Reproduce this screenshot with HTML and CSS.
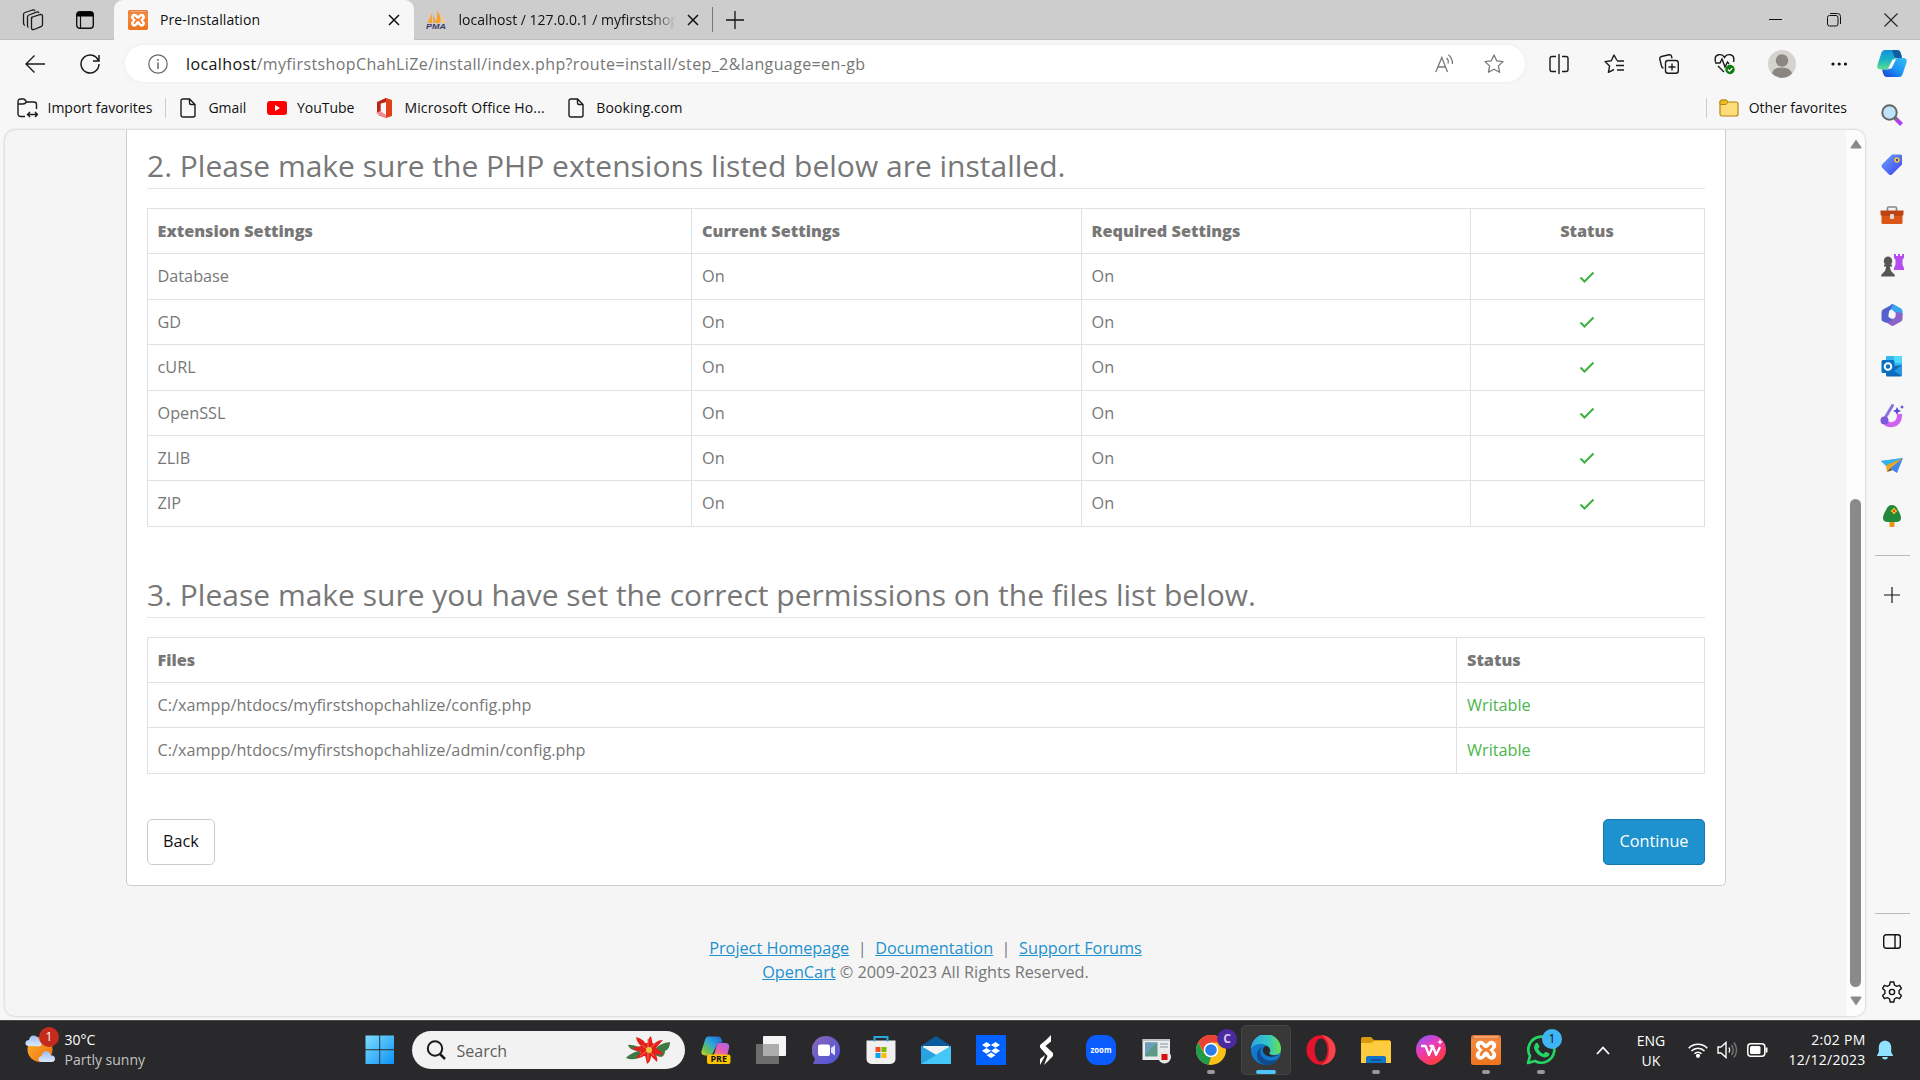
FILE: index.html
```html
<!DOCTYPE html>
<html lang="en">
<head>
<meta charset="utf-8">
<title>Pre-Installation</title>
<link rel="stylesheet" href="styles.css">
</head>
<body>
<svg width="0" height="0" class="defs" aria-hidden="true">
  <defs>
    <linearGradient id="orange" x1="0" y1="0" x2="0" y2="1"><stop offset="0" stop-color="#d8743a"/><stop offset=".2" stop-color="#f58a3c"/><stop offset="1" stop-color="#ee7420"/></linearGradient>
    <linearGradient id="cpA" x1="0" y1="0" x2="0" y2="1"><stop offset="0" stop-color="#1490df"/><stop offset=".5" stop-color="#1bb3c4"/><stop offset="1" stop-color="#5fe08a"/></linearGradient>
    <linearGradient id="cpB" x1="0" y1="1" x2="1" y2="0"><stop offset="0" stop-color="#1a3fd0"/><stop offset=".5" stop-color="#1c95f5"/><stop offset="1" stop-color="#35c0f5"/></linearGradient>
    <linearGradient id="preA" x1="1" y1="0" x2="0" y2="1"><stop offset="0" stop-color="#1b62d8"/><stop offset=".45" stop-color="#2ea6dc"/><stop offset=".75" stop-color="#6cc04a"/><stop offset="1" stop-color="#e0d030"/></linearGradient>
    <linearGradient id="preB" x1="1" y1="0" x2="0" y2="1"><stop offset="0" stop-color="#a06be8"/><stop offset=".5" stop-color="#e15bc0"/><stop offset="1" stop-color="#ff8a4a"/></linearGradient>
    <linearGradient id="win" x1="0" y1="0" x2="1" y2="1"><stop offset="0" stop-color="#7fdcff"/><stop offset="1" stop-color="#0a93f5"/></linearGradient>
    <linearGradient id="sun" x1="0" y1="0" x2="1" y2="1"><stop offset="0" stop-color="#fbb62c"/><stop offset="1" stop-color="#ef6a12"/></linearGradient>
    <linearGradient id="cloud" x1="0" y1="0" x2="0" y2="1"><stop offset="0" stop-color="#9dbcf2"/><stop offset="1" stop-color="#dce9fd"/></linearGradient>
    <linearGradient id="tag" x1="0" y1="0" x2="1" y2="1"><stop offset="0" stop-color="#6aa6ff"/><stop offset="1" stop-color="#3d3df0"/></linearGradient>
    <linearGradient id="edgeA" x1="0" y1="0" x2="1" y2="0"><stop offset="0" stop-color="#2aa8e8"/><stop offset=".6" stop-color="#35c8c0"/><stop offset="1" stop-color="#6be04a"/></linearGradient>
    <linearGradient id="wps" x1="0" y1="0" x2=".6" y2="1"><stop offset="0" stop-color="#7a5cff"/><stop offset=".45" stop-color="#e83cc0"/><stop offset="1" stop-color="#ff3a3a"/></linearGradient>
    <linearGradient id="chat" x1="0" y1="0" x2="1" y2="1"><stop offset="0" stop-color="#8a68b8"/><stop offset="1" stop-color="#4a52d8"/></linearGradient>
    <symbol id="xampp" viewBox="0 0 30 30"><rect width="30" height="30" rx="2.5" fill="url(#orange)"/><path d="M3 2h24" stroke="#f7b183" stroke-width="1.5"/><path d="M9.500 10.500l11 9.500M20.500 10.500l-11 9.500" stroke="#fff" stroke-width="9.500" stroke-linecap="round"/><path d="M10 11q1 2.500 5 3.700t5 5M20 11q-1 2.500-5 3.700t-5 5" fill="none" stroke="#f07d2c" stroke-width="2.600" stroke-linecap="round"/></symbol>
    <symbol id="page" viewBox="0 0 16 20"><path d="M3 1h6.500L15 6.500V17a2 2 0 0 1-2 2H3a2 2 0 0 1-2-2V3a2 2 0 0 1 2-2zM9.500 1v4a1.500 1.500 0 0 0 1.500 1.500h4" fill="none" stroke="#1b1b1b" stroke-width="1.400"/></symbol>
    <symbol id="cross" viewBox="0 0 12 12"><path d="M1 1l10 10M11 1L1 11" stroke="#111" stroke-width="1.500" fill="none"/></symbol>
    <symbol id="check" viewBox="0 0 16 12"><path d="M1.500 6.500l4 4L14.500 1.500" stroke="#3eb23e" stroke-width="2" fill="none"/></symbol>
    <symbol id="plus" viewBox="0 0 18 18"><path d="M9 0v18M0 9h18" stroke="#111" stroke-width="1.300"/></symbol>
  </defs>
</svg>

<div class="screen">
  <header class="tabs">
    <svg class="workspaces" width="22" height="22" viewBox="0 0 22 22" fill="none" stroke="#1b1b1b" stroke-width="1.300"><path d="M9 8.500L18.500 5.500Q20.500 5.300 20.500 7V15.500Q20.500 17 19 17.600L12 20.500Q9.500 21 9.500 19V10Q9.500 9 10.500 8.500zM6.500 18.500Q5.500 18 5.500 16.500V8Q5.500 6.500 7 6L15 3Q16.500 2.800 17 4M3 16.500Q1.500 16 1.500 14V5.500Q1.500 4 3 3.500L10.500 1Q12.500.5 13 2"/></svg>
    <svg class="tab-actions" width="18" height="18" viewBox="0 0 18 18"><rect x=".7" y=".7" width="16.600" height="16.600" rx="3" fill="none" stroke="#111" stroke-width="1.400"/><path d="M1 5V3a2 2 0 0 1 2-2h12a2 2 0 0 1 2 2v2.500H1z" fill="#000"/><path d="M4.500 5v12" stroke="#111" stroke-width="1.200"/></svg>
    <div class="tab tab-active">
      <svg width="20" height="20"><use href="#xampp"/></svg>
      <span class="tab-title">Pre-Installation</span>
      <svg class="tab-close" width="12" height="12"><use href="#cross"/></svg>
    </div>
    <div class="tab tab-idle">
      <svg width="20" height="20" viewBox="0 0 20 20"><path d="M6 3v10H1.500zM7 4.500L10 12 7 13z" fill="#f7a234"/><path d="M11 .5Q16 6 14 13H9q3-6 2-12.500z" fill="#f9a22b"/><path d="M15.500 5Q19 9 19 13h-4q1.500-4 .5-8z" fill="#fbc77a"/><text x="0" y="19" class="pma-text" textLength="20" lengthAdjust="spacingAndGlyphs">PMA</text></svg>
      <span class="tab-title tab-title-fade">localhost / 127.0.0.1 / myfirstshop</span>
      <svg class="tab-close" width="12" height="12"><use href="#cross"/></svg>
    </div>
    <i class="tab-divider"></i>
    <svg class="new-tab" width="18" height="18"><use href="#plus"/></svg>
    <div class="window-controls">
      <svg width="14" height="14" viewBox="0 0 14 14"><path d="M0 6.500h13" stroke="#111"/></svg>
      <svg width="14" height="14" viewBox="0 0 14 14" fill="none" stroke="#111"><rect x=".5" y="2.500" width="10.500" height="10.500" rx="2"/><path d="M3 .5h7.500Q13.500.5 13.500 3.500V11"/></svg>
      <svg width="14" height="14" viewBox="0 0 14 14"><path d="M.5.500l13 13M13.500.5l-13 13" stroke="#222" stroke-width="1.100"/></svg>
    </div>
  </header>

  <div class="browser">
    <div class="browser-main">
      <div class="toolbar">
        <svg class="back" width="20" height="20" viewBox="0 0 20 20" fill="none" stroke="#1b1b1b" stroke-width="1.400"><path d="M20 10H1M9.500 1.500L1 10l8.500 8.500"/></svg>
        <svg class="reload" width="20" height="20" viewBox="0 0 20 20" fill="none" stroke="#1b1b1b" stroke-width="1.500"><path d="M18.500 7A9 9 0 1 0 19 10M19 1v6h-6"/></svg>
        <div class="address">
          <svg width="20" height="20" viewBox="0 0 20 20" fill="none" stroke="#666"><circle cx="10" cy="10" r="9.200" stroke-width="1.200"/><path d="M10 8.500V15M10 5v1.700" stroke-width="1.500"/></svg>
          <span class="url"><b>localhost</b>/myfirstshopChahLiZe/install/index.php?route=install/step_2&amp;language=en-gb</span>
          <svg class="read-aloud" width="20" height="20" viewBox="0 0 20 20" fill="none" stroke="#777" stroke-width="1.300"><path d="M.8 18L6.800 3.500 12.500 18M3 13h8M11.500 4q2.500 2 1.500 5.500M13.500.8q4 3.200 4 9.200"/></svg>
          <svg width="20" height="20" viewBox="0 0 20 20" fill="none" stroke="#777" stroke-width="1.300" stroke-linejoin="round"><path d="M10 1l2.700 5.800 6.300.8-4.600 4.300 1.200 6.400L10 15.200l-5.600 3.100 1.200-6.400L1 7.600l6.300-.8z"/></svg>
        </div>
        <div class="tools">
          <svg width="20" height="20" viewBox="0 0 20 20" fill="none" stroke="#1b1b1b" stroke-width="1.400"><path d="M7 2.500H3a2 2 0 0 0-2 2v11a2 2 0 0 0 2 2h4M13 2.500h4a2 2 0 0 1 2 2v11a2 2 0 0 1-2 2h-4M10 0v20"/></svg>
          <svg width="20" height="20" viewBox="0 0 20 20" fill="none" stroke="#1b1b1b" stroke-width="1.400" stroke-linejoin="round"><path d="M13 6.500L10 1 7.300 6.800 1 7.600l4.600 4.300-1.200 6.400L10 15.500M13 7h7M12 11.500h8M13 16h7"/></svg>
          <svg width="20" height="20" viewBox="0 0 20 20" fill="none" stroke="#1b1b1b" stroke-width="1.400"><rect x="6.500" y="6.500" width="12.800" height="12.800" rx="2.500"/><path d="M13 9.500v7M9.500 13h7M4.500 14Q3 14 2.500 12L.8 5Q.5 3 2.500 2.500L10 .8q2-.3 2.500 1.500l.5 2"/></svg>
          <svg width="22" height="22" viewBox="0 0 22 22" fill="none" stroke="#1b1b1b" stroke-width="1.400"><path d="M1.500 9Q0 3 4.500 1.800 8.500 1 10.500 4.500 12.500 1 16.500 1.800 21 3 19.500 9M1 10h5l2-4 3 8 2.500-5 1.500 2M4 13l6 6"/><circle cx="16" cy="16.500" r="4.700" fill="#107c10" stroke="none"/><path d="M13.800 16.500l1.700 1.600 2.800-3" stroke="#fff" stroke-width="1.200"/></svg>
          <svg class="avatar" width="28" height="28" viewBox="0 0 28 28"><circle cx="14" cy="14" r="14" fill="#d5d3d0"/><circle cx="14" cy="10.500" r="6.200" fill="#8b8682"/><path d="M4 23.500q1.500-6 10-6t10 6A14 14 0 0 1 4 23.500z" fill="#8b8682"/></svg>
          <svg class="more" width="18" height="18" viewBox="0 0 18 18" fill="#111"><circle cx="3" cy="9" r="1.600"/><circle cx="9.200" cy="9" r="1.600"/><circle cx="15.500" cy="9" r="1.600"/></svg>
        </div>
      </div>

      <nav class="favorites">
        <svg class="import" width="21" height="20" viewBox="0 0 21 20" fill="none" stroke="#1b1b1b" stroke-width="1.400"><path d="M8 18.500H3.500a2.500 2.500 0 0 1-2.500-2.500V3.500A2.500 2.500 0 0 1 3.500 1H7l3 3h7a2.500 2.500 0 0 1 2.500 2.500V11M1 6h5q2 0 3.500-2M11 16.500h9M13 14l-2.500 2.500L13 19M18 14l2.500 2.500L18 19"/></svg>
        <span>Import favorites</span>
        <i class="fav-divider"></i>
        <svg class="fav-gmail" width="16" height="20"><use href="#page"/></svg>
        <span>Gmail</span>
        <svg class="fav-yt" width="20" height="14" viewBox="0 0 20 14"><rect width="20" height="14" rx="3" fill="#f00"/><path d="M8 4l5 3-5 3z" fill="#fff"/></svg>
        <span>YouTube</span>
        <svg class="fav-office" width="16" height="20" viewBox="0 0 16 20"><path d="M10 0l6 2v16l-6 2-9-3.500 9 .8V4L4.500 5.500v8L1 15V5z" fill="#e0401a"/><path d="M10 0L1 4v11l3.500-1.800V5.500L10 4z" fill="#b8261a"/><path d="M0 15l4.500-2L10 17v3z" fill="#f58a9a"/></svg>
        <span class="fav-wide">Microsoft Office Ho...</span>
        <svg class="fav-page" width="16" height="20"><use href="#page"/></svg>
        <span class="fav-wide">Booking.com</span>
        <i class="fav-divider fav-divider-right"></i>
        <svg class="fav-folder" width="20" height="18" viewBox="0 0 20 18"><path d="M1 3a2 2 0 0 1 2-2h4l2 2h8a2 2 0 0 1 2 2v10a2 2 0 0 1-2 2H3a2 2 0 0 1-2-2z" fill="#fddc7c" stroke="#b8860b" stroke-width="1.200"/><path d="M1 5V3a2 2 0 0 1 2-2h4l2 2-2 2.500H1z" fill="#eebc20" stroke="#b8860b"/></svg>
        <span>Other favorites</span>
      </nav>

      <div class="viewport">
        <div class="page">
          <main class="card">
            <h3>2. Please make sure the PHP extensions listed below are installed.</h3>
            <table class="table extensions">
              <colgroup><col class="c-name"><col class="c-current"><col class="c-required"><col></colgroup>
              <thead><tr><th>Extension Settings</th><th>Current Settings</th><th>Required Settings</th><th class="center">Status</th></tr></thead>
              <tbody>
                <tr><td>Database</td><td>On</td><td>On</td><td class="center"><svg width="16" height="12"><use href="#check"/></svg></td></tr>
                <tr><td>GD</td><td>On</td><td>On</td><td class="center"><svg width="16" height="12"><use href="#check"/></svg></td></tr>
                <tr><td>cURL</td><td>On</td><td>On</td><td class="center"><svg width="16" height="12"><use href="#check"/></svg></td></tr>
                <tr><td>OpenSSL</td><td>On</td><td>On</td><td class="center"><svg width="16" height="12"><use href="#check"/></svg></td></tr>
                <tr><td>ZLIB</td><td>On</td><td>On</td><td class="center"><svg width="16" height="12"><use href="#check"/></svg></td></tr>
                <tr><td>ZIP</td><td>On</td><td>On</td><td class="center"><svg width="16" height="12"><use href="#check"/></svg></td></tr>
              </tbody>
            </table>
            <h3>3. Please make sure you have set the correct permissions on the files list below.</h3>
            <table class="table files">
              <colgroup><col class="c-file"><col></colgroup>
              <thead><tr><th>Files</th><th>Status</th></tr></thead>
              <tbody>
                <tr><td>C:/xampp/htdocs/myfirstshopchahlize/config.php</td><td class="ok">Writable</td></tr>
                <tr><td>C:/xampp/htdocs/myfirstshopchahlize/admin/config.php</td><td class="ok">Writable</td></tr>
              </tbody>
            </table>
            <div class="actions"><a class="btn btn-light">Back</a><a class="btn btn-primary">Continue</a></div>
          </main>
          <footer class="page-footer">
            <div><a>Project Homepage</a><i>|</i><a>Documentation</a><i>|</i><a>Support Forums</a></div>
            <div><a>OpenCart</a> © 2009-2023 All Rights Reserved.</div>
          </footer>
        </div>
        <div class="scrollbar">
          <svg width="12" height="10" viewBox="0 0 12 10"><path d="M6 .5L11.500 8.500q0 1-1 1h-9q-1 0-1-1z" fill="#8a8a8a"/></svg>
          <i class="thumb"></i>
          <svg width="12" height="10" viewBox="0 0 12 10"><path d="M6 9.500L11.500 1.500q0-1-1-1h-9q-1 0-1 1z" fill="#8a8a8a"/></svg>
        </div>
      </div>
    </div>

    <aside class="sidebar">
      <svg class="copilot" width="30" height="28" viewBox="0 0 30 28"><path d="M8 0h12q3 0 4 4l1 4h-5q-3 0-4 3l-3 6q-1 2.500-4 2.500H3Q-.5 19 .5 15L4 4Q5 0 8 0z" fill="url(#cpA)"/><path d="M15 0h5q3 0 4 4l1 4h-5q-3 0-3.500-4z" fill="#0d5f9e"/><path d="M22 27H10q-3 0-4-4l-1-3.500h5q3 0 4-3l3-6q1-2.500 4-2.500h6q3.500.5 2.500 4.500L26 23q-1 4-4 4z" fill="url(#cpB)"/><path d="M15.500 9.500h3.500l-4.500 9H11z" fill="#f7f7f7"/></svg>
      <svg width="24" height="24" viewBox="0 0 24 24"><path d="M15 15l6.500 6.500" stroke="#b13df0" stroke-width="4"/><path d="M14 14l3 3" stroke="#777" stroke-width="3"/><circle cx="9.500" cy="9.500" r="7.200" fill="#bfe4fb" stroke="#666" stroke-width="2"/></svg>
      <svg width="24" height="24" viewBox="0 0 24 24"><path d="M12 1.500h8.500q1.500 0 1.500 1.500v8.500L12 21.500q-1.500 1-3 0L2 14.500q-1-1.500 0-3z" fill="url(#tag)"/><circle cx="17" cy="7" r="2" fill="#3548c0" stroke="#f8c830" stroke-width="1.600"/></svg>
      <svg width="24" height="24" viewBox="0 0 24 24"><path d="M7.500 8V5q0-1 1-1h7q1 0 1 1v3" fill="none" stroke="#888" stroke-width="1.700"/><rect x="1.500" y="8" width="21" height="13" rx="1.500" fill="#dc5618"/><path d="M.5 7.500h23V11q0 2-2 2h-19q-2 0-2-2z" fill="#bd4412"/><rect x="10" y="11" width="4" height="5" rx="1" fill="#d8d8d8"/></svg>
      <svg width="24" height="24" viewBox="0 0 24 24"><path d="M14 1h2v2h2V1h2v2h2V1h2v4l-1.500 1.500v5L24 15v2H14v-2l1.500-3.500v-5L14 5z" fill="#b54cf0"/><path d="M8 3.500a4.500 4.500 0 0 1 2.500 8H12v2h-2q0 4 3 6.500 2 1 2 3.500H1q0-2.500 2-3.500 3-2.500 3-6.500H4v-2h1.500a4.500 4.500 0 0 1 2.500-8z" fill="#565656"/></svg>
      <svg width="24" height="24" viewBox="0 0 24 24"><path d="M11 1.500q1.500-.8 3 0L21 5.500q1.500 1 1.500 2.500v5L15 9.500l-3-3-5 2z" fill="#38a6ec"/><path d="M22.500 10v6q0 1.500-1.500 2.500l-7 4q-1.500.8-3 0L6 19l8-3 2-7z" fill="#8a62c8"/><path d="M13 1L3 6.500Q1.500 7.500 1.500 9v7q0 1.500 1.500 2.500 3 2 6 .5l5-3-5-3V9q0-2 2-3z" fill="#5560cf"/><path d="M12 8.500l3.500 2v3.500L12 16l-3.500-2v-3.500z" fill="#f7f7f7"/></svg>
      <svg width="24" height="24" viewBox="0 0 24 24"><rect x="6" y="2" width="16" height="12" rx="1" fill="#35b8f1"/><path d="M14 2h7q1 0 1 1v6h-8z" fill="#50d9ff"/><path d="M6 13l16-2v10q0 1.500-1.500 1.500h-13Q6 22.500 6 21z" fill="#1068b8"/><path d="M22 11L14 17l8 5z" fill="#2a98e0"/><rect x="1.500" y="6" width="13" height="13" rx="1.500" fill="#0a70c4"/><circle cx="8" cy="12.500" r="3.300" fill="none" stroke="#fff" stroke-width="2"/></svg>
      <svg width="24" height="24" viewBox="0 0 24 24" fill="none"><path d="M5 16q1 5.500 7.500 4.500Q20 19 19.500 10" stroke="#d060ee" stroke-width="5"/><path d="M12.500 1.500L5 14" stroke="#8a72e0" stroke-width="3" stroke-linecap="round"/><circle cx="4.500" cy="16.500" r="4" fill="#7d58dc"/><path d="M17 3l1.300 2.700L21 7l-2.700 1.300L17 11l-1.300-2.700L13 7l2.700-1.300zM22 1l.7 1.300L24 3l-1.300.7L22 5l-.7-1.300L20 3l1.300-.7z" fill="#5c48dc"/></svg>
      <svg width="24" height="24" viewBox="0 0 24 24"><path d="M1 7l22-3-6 15-7-4.500z" fill="#3f87ea"/><path d="M1 7l22-3L6 12z" fill="#35b3e8"/><path d="M23 4L6 11.500 7 18l3-3.500z" fill="#efa51e"/><path d="M7 18l3-3.500L12.500 16z" fill="#704010"/></svg>
      <svg width="24" height="24" viewBox="0 0 24 24"><path d="M9.500 17h5v5q0 1-1 1h-3q-1 0-1-1z" fill="#f0930d"/><path d="M12 1q4 0 6 5 3 5 3 8 0 4-5 4H8q-5 0-5-4 0-3 3-8 2-5 6-5z" fill="#23873c"/><path d="M14 3.500l1.500 2 2 1.500-2 1.500-1.500 2-1.500-2-2-1.500 2-1.500z" fill="#ffc61a"/><circle cx="14" cy="7" r="1.200" fill="#e04a20"/></svg>
      <i class="side-line"></i>
      <svg class="side-plus" width="16" height="16" viewBox="0 0 18 18"><use href="#plus"/></svg>
      <i class="side-line side-line-low"></i>
      <svg class="side-panel" width="18" height="15" viewBox="0 0 18 15" fill="none" stroke="#111" stroke-width="1.400"><rect x=".7" y=".7" width="16.600" height="13.600" rx="2.500"/><path d="M12 1v13"/></svg>
      <svg class="side-gear" width="22" height="22" viewBox="0 0 22 22" fill="none" stroke="#111" stroke-width="1.400" stroke-linejoin="round"><path d="M9.200 1h3.600l.6 3 2.200 1.300 3-1 1.800 3.100-2.300 2.100v3l2.300 2.100-1.800 3.100-3-1-2.200 1.300-.6 3H9.200l-.6-3-2.200-1.300-3 1-1.800-3.100 2.300-2.100v-3L1.600 7.400l1.800-3.100 3 1L8.600 4z"/><circle cx="11" cy="11" r="2.600"/></svg>
    </aside>
  </div>

  <footer class="taskbar">
    <div class="weather">
      <div class="weather-icon">
        <svg width="32" height="30" viewBox="0 0 32 30"><circle cx="15" cy="14.500" r="12.500" fill="url(#sun)"/><path d="M3 11Q0 10 .5 7.500 1 5 4 5 5 0 9 .5q4 .5 4.500 4Q17 5 17 8t-3 3.200z" fill="url(#cloud)"/><path d="M16 27q-3-1-2.500-3.500.5-2.500 3-2.500 1-5 5-4.800 3.500.3 4.200 4 4.300.3 4.300 3.500T26.500 27z" fill="url(#cloud)"/></svg>
        <span class="badge-red">1</span>
      </div>
      <div class="weather-text"><span>30°C</span><span class="muted">Partly sunny</span></div>
    </div>
    <svg class="start" width="30" height="30" viewBox="0 0 30 30" fill="url(#win)"><path d="M.5.500h13.800v13.800H.5zM15.200.5H29v13.800H15.200zM.5 15.200h13.800V29H.5zM15.200 15.200H29V29H15.200z"/></svg>
    <div class="search">
      <svg width="20" height="20" viewBox="0 0 20 20" fill="none" stroke="#1b1b1b" stroke-width="2"><circle cx="9" cy="8.500" r="7.200"/><path d="M13.500 13.500L19 19" stroke-width="2.500"/></svg>
      <span>Search</span>
      <svg class="flower" width="46" height="30" viewBox="0 0 46 30"><path d="M14 12Q5 9 3 10q1 5 10 6Q4 19 1 23q7 3 15-1zM31 13q5-5 14-6 0 7-5 9 0 5-4 6-4 0-7-3z" fill="#3f7a45"/><path d="M23 15L19 6q-4-3-8-4 1 6 5 9l-9 2q4 4 10 3l-6 7q5 1 9-3l2 9q4-3 4-8l6 6q1-5-2-8l8 1q-2-6-8-6l8-9q-6 0-10 5l-2-9q-4 3-3 8z" fill="#e3211c"/><path d="M18 8h10l4 6-3 7H18l-4-6z" fill="#e3211c"/><path d="M23 15l-6-5M23 15l-8 6M23 15l7-6M23 15l6 6M23 15v10M23 15V4" stroke="#ff6a4a" stroke-width="1"/><circle cx="24" cy="15" r="3" fill="#e8c83a"/></svg>
    </div>
    <div class="apps">
      <span><svg width="30" height="30" viewBox="0 0 30 30"><path d="M7 1.500h10q3 0 4 4l.5 2h-3q-2 0-3 3L12 18q-1 2.500-4 2.500H4Q-.5 20 .5 16L4 5q1-3.500 3-3.500z" fill="url(#preA)"/><path d="M18 8h7q4 .5 3 5l-2 8H12l2-4 1.500-6Q16 8 18 8z" fill="url(#preB)"/><rect x="6" y="19.500" width="23.500" height="9.500" rx="2" fill="#fdc500"/><text x="9.500" y="27.300" class="pre-text" textLength="16.500" lengthAdjust="spacingAndGlyphs">PRE</text></svg></span>
      <span><svg width="30" height="30" viewBox="0 0 30 30"><rect x="7" y="1" width="23" height="20" rx="1" fill="#f4f4f4"/><rect x="0" y="9" width="23" height="20" rx="1" fill="#6d6d6d"/><path d="M7 9h16v12H7z" fill="#adadad"/></svg></span>
      <span><svg width="28" height="30" viewBox="0 0 28 30"><path d="M14 1a14 14 0 1 1 0 28H1l2-5A14 14 0 0 1 14 1z" fill="url(#chat)"/><rect x="6" y="9.500" width="12" height="11.500" rx="2" fill="#fff"/><path d="M19 13l4-3v10.500l-4-3z" fill="#e4e4ff"/></svg></span>
      <span><svg width="30" height="30" viewBox="0 0 30 30"><path d="M.5 5.500h29V24a5 5 0 0 1-5 5h-19a5 5 0 0 1-5-5z" fill="#f0f0f0"/><path d="M8.500 6.500V2h13v4.500" fill="none" stroke="#28a8e0" stroke-width="2"/><path d="M9.500 12h5v5h-5z" fill="#f25022"/><path d="M15.500 12h5v5h-5z" fill="#7fba00"/><path d="M9.500 18h5v5h-5z" fill="#00a4ef"/><path d="M15.500 18h5v5h-5z" fill="#ffb900"/></svg></span>
      <span><svg width="30" height="30" viewBox="0 0 30 30"><path d="M0 11L15 1l15 10v3H0z" fill="#0b5a9e"/><path d="M2 11h26v6l-13 7-13-7z" fill="#f3f3f3"/><path d="M0 11l15 9 15-9v18H0z" fill="#36b6ee"/><path d="M0 29l30-18v18z" fill="#45c8f8"/><path d="M0 11l15 9L0 29z" fill="#2aa2e2"/></svg></span>
      <span><svg width="30" height="30" viewBox="0 0 30 30"><path d="M0 0h30v30H0z" fill="#0061fe"/><path d="M10.500 7l4.500 2.900-4.500 2.900L6 9.900zM19.500 7L24 9.900l-4.500 2.900L15 9.900zM10.500 12.900l4.500 2.900-4.500 2.900L6 15.800zM19.500 12.900l4.500 2.900-4.500 2.900-4.500-2.900zM15 17.500l4.500 2.700L15 23l-4.500-2.800z" fill="#fff"/></svg></span>
      <span><svg width="30" height="30" viewBox="0 0 30 30" fill="#fff"><path d="M20 0v6.500L14.500 11 22 18v3l-9 9 3.500-9L9 12.500V10L15 5zM9 30v-6l5-4-1 3z"/></svg></span>
      <span><svg width="30" height="30" viewBox="0 0 30 30"><rect width="30" height="30" rx="11" fill="#0b5cff"/><text x="4.500" y="17.800" class="zoom-text" textLength="21" lengthAdjust="spacingAndGlyphs">zoom</text></svg></span>
      <span><svg width="30" height="30" viewBox="0 0 30 30"><path d="M1.500 4H29v21H1.500z" fill="#e9ebec"/><path d="M4 7.500h12.500v14H4z" fill="#5a9a86"/><path d="M4 7.500h12.500L4 19z" fill="#6f9dbb"/><path d="M19 9h8M19 12h8M1.500 5h27" stroke="#a9b4ba" stroke-width="1.500"/><circle cx="23.500" cy="22" r="6.500" fill="#e6e6e6"/><path d="M20.500 19h6v6h-6z" fill="#d40f0f"/></svg></span>
      <span class="running"><svg width="30" height="30" viewBox="0 0 30 30"><circle cx="15" cy="15" r="15" fill="#fbc116"/><path d="M2 7.500A15 15 0 0 1 28 7.500H15L9 18.500z" fill="#ea4335"/><path d="M2 7.500L8.500 18.700 15 22.500l-2.500 7.300A15 15 0 0 1 2 7.500z" fill="#229a4b"/><circle cx="15" cy="15" r="7.300" fill="#fff"/><circle cx="15" cy="15" r="5.800" fill="#2a7bea"/></svg><b class="badge-app badge-purple">C</b></span>
      <span class="active"><svg width="30" height="30" viewBox="0 0 30 30"><circle cx="15" cy="15" r="15" fill="#1279cd"/><path d="M0 14A15 15 0 0 1 30 14q0 6-7 6-4.500 0-5-2 2.500-2 0-5.500Q15 9 10 9 3 9 0 14z" fill="url(#edgeA)"/><path d="M11 12q-4 6 1 11 6 5 15 1-5 7-13 6Q5 27 6 19q1-5 5-7z" fill="#114a8e"/><path d="M18 18q2.500-2 0-5.500-2.500-2.500-5-.5-2.500 3 0 6.500 4.500 5 12 2.500l2.500-1q-3 .5-5 .4-4-.2-4.500-2.400z" fill="#2a2a2a"/></svg></span>
      <span><svg width="30" height="30" viewBox="0 0 30 30"><ellipse cx="15" cy="15" rx="14.500" ry="14.800" fill="#e5142c"/><path d="M15 .2a14.500 14.800 0 0 1 0 29.600q8-3 8-14.800T15 .2z" fill="#f5454a"/><ellipse cx="15" cy="15" rx="6.500" ry="11.500" fill="#2a2a2a"/></svg></span>
      <span class="running"><svg width="30" height="30" viewBox="0 0 30 30"><path d="M0 4q0-2 2-2h8l3 3h16v6H0z" fill="#d99a0e"/><path d="M0 8h10l3-2h16q1 0 1 1v21H0z" fill="#fccb3e"/><path d="M5 28v-5q0-2 2-2h16q2 0 2 2v5z" fill="#1173c8"/><path d="M10 25h10" stroke="#0b4f92" stroke-width="1.600"/></svg></span>
      <span><svg width="30" height="30" viewBox="0 0 30 30"><path d="M15 0a15 15 0 0 1 15 14q0 8-6 12-5 4-9 4T6 26q-6-4-6-12A15 15 0 0 1 15 0z" fill="url(#wps)"/><path d="M5 11h4.500l3.500 9 4-9h-3.500M17 11l3 9 4-8" fill="none" stroke="#fff" stroke-width="2.300" stroke-linejoin="round"/><path d="M24 4l.8 2.200L27 7l-2.200.8L24 10l-.8-2.200L21 7l2.200-.8z" fill="#fff"/></svg></span>
      <span class="running"><svg width="30" height="30"><use href="#xampp"/></svg></span>
      <span class="running"><svg width="30" height="30" viewBox="0 0 30 30"><path d="M2 28l2-7A13 13 0 1 1 9 26z" fill="none" stroke="#25d366" stroke-width="2.700" stroke-linejoin="round"/><path d="M9.500 8.500q1.500-1.500 2.500 0l1.500 3q0 1-1.500 2.200 2 4 5.500 5.300l1.800-2q.7-.5 3.700 1.300 1 .7-.3 2.700-2.200 2-5.200 1.300Q9.500 19.500 8 13q0-3 1.500-4.500z" fill="#25d366"/></svg><b class="badge-app badge-blue">1</b></span>
    </div>
    <div class="tray">
      <svg class="caret" width="14" height="9" viewBox="0 0 14 9" fill="none" stroke="#fff" stroke-width="1.800"><path d="M1 8l6-6.500L13 8"/></svg>
      <div class="lang"><span>ENG</span><span>UK</span></div>
      <svg class="wifi" width="20" height="16" viewBox="0 0 20 16" fill="none" stroke="#fff" stroke-width="1.600"><path d="M.7 6.200a13 13 0 0 1 18.600 0M3.500 9a9 9 0 0 1 13 0M6.500 11.800a5 5 0 0 1 7 0"/><circle cx="10" cy="13.800" r="1.300" fill="#fff"/></svg>
      <svg class="volume" width="21" height="18" viewBox="0 0 21 18" fill="none" stroke="#fff" stroke-width="1.400"><path d="M1 6h3l5-4.500v15L4 12H1z"/><path d="M12 6.500q1.500 2.500 0 5"/><path d="M14.500 4q3.500 5 0 10M17 1.500q5 7.500 0 15" stroke="#777"/></svg>
      <svg class="battery" width="21" height="14" viewBox="0 0 21 14"><rect x=".8" y=".8" width="17" height="12.400" rx="3" fill="none" stroke="#fff" stroke-width="1.500"/><rect x="3" y="3" width="10.500" height="8" rx="1.500" fill="#fff"/><path d="M19.500 4.500v5" stroke="#fff" stroke-width="2"/></svg>
      <div class="clock"><span>2:02 PM</span><span>12/12/2023</span></div>
      <svg class="bell" width="18" height="20" viewBox="0 0 18 20" fill="#8fe3ff"><path d="M9 .5q6 .5 6.200 7v4.500l2 4H.8l2-4V7.500Q3 1 9 .5zM6 17h6q-.5 2.500-3 2.500T6 17z"/></svg>
    </div>
  </footer>
</div>
</body>
</html>
```

FILE: styles.css
```css
* { box-sizing: border-box; }
body { margin: 0; background: #f7f7f7; font-family: "Open Sans", "Noto Sans", sans-serif; color: #111; overflow: hidden; }
svg { display: block; flex: none; }
i { font-style: normal; }
.defs { position: absolute; }
.screen { width: 1920px; height: 1080px; display: flex; flex-direction: column; }

/* Tab strip */
.tabs { height: 40px; flex: none; display: flex; align-items: center; background: #cdcdcd; border-bottom: 1px solid #bfbfbf; font-size: 14px; }
.workspaces { margin-left: 21.500px; }
.tab-actions { margin-left: 32.500px; }
.tab { display: flex; align-items: center; height: 40px; white-space: nowrap; }
.tab-active { width: 300px; margin-left: 20px; padding: 0 14px; background: #f7f7f7; border-radius: 9px 9px 0 0; letter-spacing: .08px; }
.tab-title { margin-left: 12px; }
.tab-close { margin-left: auto; }
.tab-idle { width: 298px; padding: 0 13px 0 12px; }
.tab-title-fade { width: 217px; margin-left: 12.500px; overflow: hidden; -webkit-mask-image: linear-gradient(90deg, #000 89%, transparent); mask-image: linear-gradient(90deg, #000 89%, transparent); }
.pma-text { font: italic bold 8px "Liberation Sans", sans-serif; fill: #3c3c6c; }
.tab-divider { width: 1px; height: 25px; background: #777; }
.new-tab { margin-left: 13px; }
.window-controls { margin-left: auto; display: flex; gap: 43.500px; padding-right: 22px; }

.browser { flex: 1; display: flex; min-height: 0; }
.browser-main { width: 1866px; display: flex; flex-direction: column; }

/* Toolbar */
.toolbar { height: 47px; flex: none; display: flex; align-items: center; padding-left: 25px; }
.reload { margin-left: 35px; }
.address { width: 1400px; height: 37px; margin-left: 25px; padding: 0 21px 0 22.500px; display: flex; align-items: center; background: #fff; border-radius: 19px; box-shadow: 0 0 4px rgba(0,0,0,.06); }
.url { margin-left: 18.500px; font-size: 16px; letter-spacing: .385px; color: #767676; white-space: nowrap; }
.url b { font-weight: 400; color: #111; }
.read-aloud { margin-left: auto; margin-right: 29px; }
.tools { display: flex; align-items: center; gap: 35px; margin-left: 24px; }
.avatar { margin-left: -3px; }
.more { margin-left: -1px; }

/* Favorites bar */
.favorites { height: 43px; flex: none; display: flex; align-items: center; padding: 0 19px 2px 17px; font-size: 14px; white-space: nowrap; }
.import { margin-right: 9.500px; }
.fav-divider { width: 1px; height: 20px; margin-left: 13px; background: #ccc; }
.fav-gmail { margin: 0 12px 0 14px; }
.fav-yt { margin: 0 9.500px 0 21px; }
.fav-office { margin: 0 12.500px 0 21.500px; }
.fav-page { margin: 0 12.500px 0 23px; }
.fav-wide { letter-spacing: .14px; }
.fav-divider-right { margin-left: auto; }
.fav-folder { margin: 0 10px 0 12px; }

/* Page viewport */
.viewport { width: 1860px; height: 886px; margin-left: 5px; display: flex; background: #f5f5f5; border-radius: 10px; overflow: hidden; box-shadow: 0 0 3px rgba(0,0,0,.25); }
.page { flex: 1; display: flex; flex-direction: column; font-size: 16.250px; line-height: 24.375px; color: #777; }
.card { width: 1600px; height: 756px; margin-left: 121px; padding: 14px 20px 0; background: #fff; border: 1px solid #ccc; border-top: 0; border-radius: 0 0 5px 5px; }
.card h3 { height: 45px; margin: 0 0 19px; font-size: 30px; font-weight: 400; line-height: 44px; border-bottom: 1px solid #e5e5e5; white-space: nowrap; }
.table { width: 1558px; border-collapse: collapse; table-layout: fixed; }
.table th, .table td { height: 45.400px; padding: 9.500px 10px; border: 1px solid #dee2e6; text-align: left; font-weight: 400; }
.table th:first-child, .table td:first-child { padding-left: 9.500px; }
.table th { font-weight: 800; }
.table .center { text-align: center; padding-right: 11px; }
.files th, .files td { height: 45.300px; }
.center svg { margin: 0 auto; }
.c-name { width: 544px; }
.c-current, .c-required { width: 389.500px; }
.c-file { width: 1309px; }
.extensions { margin-bottom: 46px; }
.ok { color: #4cb64c; }
.actions { display: flex; justify-content: space-between; margin-top: 45px; }
.btn { height: 46px; padding: 9px 15px; border: 1px solid #ccc; border-radius: 5px; }
.btn-light { color: #111; background: #fff; }
.btn-primary { padding: 9px 15.500px; color: #fff; background: #1e91cf; border-color: #1978ab; }
.page-footer { margin-top: 50px; text-align: center; }
.page-footer a { color: #1e91cf; text-decoration: underline; }
.page-footer i { margin: 0 8.500px; }
.scrollbar { width: 19px; background: #fcfcfc; display: flex; flex-direction: column; align-items: center; padding: 9px 0; }
.thumb { width: 11px; height: 488px; margin-top: 350px; margin-bottom: 9px; border-radius: 6px; background: #8a8a8a; }

/* Sidebar */
.sidebar { width: 54px; display: flex; flex-direction: column; align-items: center; padding: 10px 2px 0 0; gap: 26.200px; }
.copilot { margin-bottom: -1.500px; }
.side-line { width: 35px; height: 1px; margin-top: 1px; background: #bbb; }
.side-plus { margin-top: 4px; }
.side-line-low { margin-top: 284px; }
.side-panel { margin-top: -5.500px; }
.side-gear { margin-top: 5px; }

/* Taskbar */
.taskbar { height: 60px; flex: none; display: flex; align-items: center; padding-bottom: 1px; background: #29292b; border-top: 1px solid #4a4a4a; color: #fff; }
.weather { width: 364.500px; display: flex; padding-left: 25px; }
.weather-icon { position: relative; width: 39.500px; padding-top: 5px; }
.badge-red { position: absolute; left: 14px; top: -3px; width: 20px; height: 20px; border-radius: 50%; background: #c42b1c; font-size: 12px; line-height: 20px; text-align: center; }
.weather-text { display: flex; flex-direction: column; align-items: flex-start; font-size: 14px; line-height: 20px; white-space: nowrap; }
.muted { color: #c4c4c4; }
.search { width: 273px; height: 38px; margin-left: 17px; padding: 0 14px; display: flex; align-items: center; gap: 11px; border-radius: 19px; background: #f2f2f2; color: #5c5c5c; font-size: 16px; }
.search span { padding-top: 1px; }
.flower { margin-left: auto; }
.apps { display: flex; margin-left: 6.500px; gap: 5px; }
.apps > span { position: relative; width: 50px; height: 50px; display: flex; align-items: center; justify-content: center; border-radius: 5px; }
.apps .active { background: #383838; box-shadow: inset 0 0 0 1px #434343; }
.running::after, .active::after { content: ""; position: absolute; bottom: 1px; width: 8px; height: 4px; border-radius: 2px; background: #999; }
.active::after { width: 20px; background: #4cc2ff; }
.badge-app { position: absolute; right: -1px; top: 4px; width: 20px; height: 20px; border-radius: 50%; font-size: 12px; line-height: 20px; text-align: center; }
.badge-purple { background: #4b2aa0; color: #d5c8f5; }
.badge-blue { right: 4px; background: #3fb5f5; color: #111; font-weight: 400; }
.pre-text { font: bold 8px "Open Sans", sans-serif; fill: #111; }
.zoom-text { font: bold 8px "Open Sans", sans-serif; fill: #fff; }
.tray { display: flex; align-items: center; margin-left: 30px; font-size: 14px; line-height: 20px; white-space: nowrap; }
.lang { width: 32px; margin-left: 25px; padding-top: 2px; display: flex; flex-direction: column; align-items: center; }
.wifi { margin-left: 21px; }
.volume { margin-left: 9px; }
.battery { margin-left: 9px; }
.clock { width: 80px; margin-left: 17.500px; display: flex; flex-direction: column; align-items: flex-end; letter-spacing: .27px; }
.bell { margin-left: 10.500px; }
```
